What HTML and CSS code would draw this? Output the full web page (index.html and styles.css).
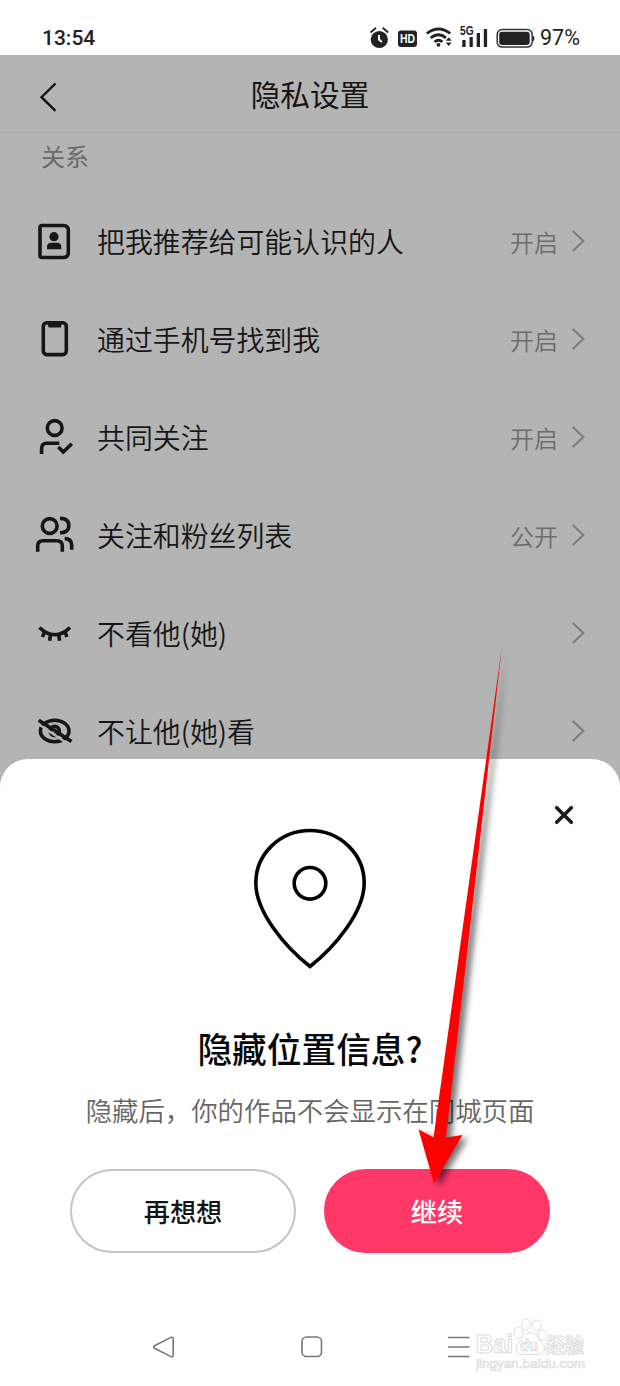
FILE: index.html
```
<!DOCTYPE html>
<html lang="zh-CN">
<head>
<meta charset="utf-8">
<title>隐私设置</title>
<link rel="stylesheet" href="styles.css">
</head>
<body>
<div class="screen">
  <div class="status">
    <span class="time">13:54</span>
    <svg class="status-icons" width="176" height="30" viewBox="0 0 176 30">
      <g fill="#222">
        <circle cx="19.300" cy="16.500" r="8.600"/>
        <path d="M10.500 9.500l5.500-4.700M28.200 9.500l-5.500-4.700" stroke="#222" stroke-width="1.800"/>
        <path d="M19 12v4.500l2.800 2.500" fill="none" stroke="#fff" stroke-width="2"/>
        <rect x="38" y="7.500" width="19" height="16.500" rx="3"/>
        <text x="47.500" y="20.300" class="hd" textLength="15" lengthAdjust="spacingAndGlyphs">HD</text>
        <g fill="none" stroke="#222" stroke-width="2.800">
          <path d="M66.800 10.500Q78.500 1.500 90.200 10.500M70.700 14.800Q78.500 8.800 86 14.800M74.600 18.800Q78.500 15.800 82.400 18.800"/>
        </g>
        <circle cx="78.500" cy="21.800" r="1.900"/>
        <path d="M85.700 17.700l3-3.500 3 3.500zM85.700 19.500l3 3.500 3-3.500z"/>
        <text x="100" y="12.300" class="fiveg" textLength="13.500" lengthAdjust="spacingAndGlyphs">5G</text>
        <path d="M102.300 17h3.300v7h-3.300zM109.500 14h3.300v10h-3.300zM116.700 10h3.300v14h-3.300zM123.800 6h3.300v18h-3.300z"/>
        <rect x="137.200" y="6.500" width="35" height="17.600" rx="5" fill="none" stroke="#333" stroke-width="1.500"/>
        <rect x="139.200" y="8.700" width="30.500" height="13.200" rx="3"/>
        <path d="M173 12.500q3 3 0 6z"/>
      </g>
    </svg>
    <span class="battery">97%</span>
  </div>

  <div class="page">
    <div class="header">
      <svg class="back" width="26" height="34" viewBox="0 0 26 34"><path d="M21.500 3.500L7.500 17.200l14 13.700"/></svg>
      <h1>隐私设置</h1>
    </div>
    <div class="section">关系</div>
    <div class="row">
      <svg class="icon" viewBox="0 0 40 40"><path d="M8 3.500h21.300q5 0 5 5v22q0 5-5 5H8q-2 0-2-2v-28q0-2 2-2z"/><circle class="solid" cx="20" cy="14.700" r="4.600"/><path class="solid" d="M13 27.300v-2.300q0-4.300 4.300-4.300h5.700q4.300 0 4.300 4.300v2.300z"/></svg>
      <span class="label">把我推荐给可能认识的人</span><span class="value">开启</span>
      <svg class="chev" viewBox="0 0 14 24"><path d="M2.300 2.500l10 9.500-10 9.500"/></svg>
    </div>
    <div class="row">
      <svg class="icon" viewBox="0 0 40 40"><rect x="9.300" y="2.800" width="23" height="31.800" rx="3.500"/><path class="solid" d="M13 3h15l-1.200 4.500H14.800z"/></svg>
      <span class="label">通过手机号找到我</span><span class="value">开启</span>
      <svg class="chev" viewBox="0 0 14 24"><path d="M2.300 2.500l10 9.500-10 9.500"/></svg>
    </div>
    <div class="row">
      <svg class="icon" viewBox="0 0 40 40"><circle cx="20.700" cy="10" r="7.400"/><path d="M7.600 36v-5.500q0-5.200 5.200-5.200h12.500M24.300 29l5 5 8.500-8.300"/></svg>
      <span class="label">共同关注</span><span class="value">开启</span>
      <svg class="chev" viewBox="0 0 14 24"><path d="M2.300 2.500l10 9.500-10 9.500"/></svg>
    </div>
    <div class="row">
      <svg class="icon" viewBox="0 0 40 40"><circle cx="15.700" cy="10" r="7.400"/><path d="M3.700 35.700V30q0-5.300 5.300-5.300h14q5.300 0 5.300 5.300v5.700M26 2.400q8.800 0 8.800 7.200T26 16.800M30.700 22.600q7 .2 7 6.400v4.800"/></svg>
      <span class="label">关注和粉丝列表</span><span class="value">公开</span>
      <svg class="chev" viewBox="0 0 14 24"><path d="M2.300 2.500l10 9.500-10 9.500"/></svg>
    </div>
    <div class="row">
      <svg class="icon" viewBox="0 0 40 40"><path d="M5.500 13.500Q12.500 20.700 20.700 20.700T36 13.500M10.500 17.500L8.500 23M16.600 20l-1 6.800M24.600 20l1 6.800M30.900 17.500l2 5.500"/></svg>
      <span class="label">不看他(她)</span>
      <svg class="chev" viewBox="0 0 14 24"><path d="M2.300 2.500l10 9.500-10 9.500"/></svg>
    </div>
    <div class="row">
      <svg class="icon" viewBox="0 0 40 40"><ellipse cx="20.700" cy="19" rx="14.300" ry="10.800"/><circle cx="20.700" cy="19" r="4.600"/><path class="gap" d="M2 10.600l31 20.600"/><path d="M4.700 8.300l32.800 21.300"/></svg>
      <span class="label">不让他(她)看</span>
      <svg class="chev" viewBox="0 0 14 24"><path d="M2.300 2.500l10 9.500-10 9.500"/></svg>
    </div>
  </div>

  <div class="sheet">
    <svg class="close" width="20" height="20" viewBox="0 0 20 20"><path d="M2.700 2.700l14.600 14.600M17.300 2.700l-14.600 14.600"/></svg>
    <svg class="pin" width="120" height="146" viewBox="0 0 120 146"><path d="M60 140.500C35 121 5.800 86 5.800 57a54.200 52.500 0 0 1 108.400 0C114.200 86 85 121 60 140.500z"/><circle cx="60" cy="57.300" r="15.800"/></svg>
    <h2>隐藏位置信息?</h2>
    <p>隐藏后，你的作品不会显示在同城页面</p>
    <div class="buttons">
      <button class="btn">再想想</button>
      <button class="btn primary">继续</button>
    </div>
    <div class="nav">
      <svg width="24" height="24" viewBox="0 0 24 24"><path d="M2.500 10.700L19 2.400q2.200-.8 2.200 1.500v16.200q0 2.300-2.200 1.500L2.500 13.300q-1.800-1.300 0-2.600z"/></svg>
      <svg width="24" height="24" viewBox="0 0 24 24"><rect x="2" y="2" width="19.500" height="19.500" rx="4.500"/></svg>
      <svg width="24" height="24" viewBox="0 0 24 24"><path d="M0 2.500h21.500M0 12h21.500M0 21.500h21.500"/></svg>
    </div>
  </div>

  <svg class="watermark" width="120" height="64" viewBox="0 0 120 64">
    <text x="4" y="36" class="wm-big" textLength="37" lengthAdjust="spacingAndGlyphs">Bai</text>
    <g class="wm-paw">
      <ellipse cx="45.500" cy="15.500" rx="4.300" ry="5.700"/><ellipse cx="53" cy="7.500" rx="4.500" ry="5.500"/><ellipse cx="63.500" cy="8.500" rx="4.500" ry="5.500"/><ellipse cx="69.500" cy="18" rx="4.300" ry="5.500"/>
      <path d="M57 15.500c6 0 8 6 12 10s4 12-5 12H50c-9 0-8-8-4-12s5-10 11-10z"/>
    </g>
    <text x="48" y="34" class="wm-du" textLength="18" lengthAdjust="spacingAndGlyphs">du</text>
    <text x="74" y="36" class="wm-cn" textLength="38" lengthAdjust="spacingAndGlyphs">经验</text>
    <text x="4" y="51" class="wm-url" textLength="109" lengthAdjust="spacingAndGlyphs">jingyan.baidu.com</text>
  </svg>

  <svg class="arrow" width="620" height="1386" viewBox="0 0 620 1386"><path d="M502 646L433.500 1137.500L418.500 1129.300L434 1183.500L462.500 1135L446 1137.500Z"/></svg>
</div>
</body>
</html>
```
FILE: styles.css
```
* { box-sizing: border-box; }
body {
  margin: 0;
  background: #fff;
  font-family: "Noto Sans CJK SC", sans-serif;
}
.screen {
  position: relative;
  display: flex;
  flex-direction: column;
  width: 620px;
  height: 1386px;
  overflow: hidden;
}
.status {
  display: flex;
  align-items: center;
  height: 55px;
  padding: 21px 40px 0 42px;
  color: #222;
  font-family: Roboto, sans-serif;
  font-size: 21.5px;
  line-height: 34px;
}
.time { width: 318px; font-weight: 500; font-size: 21px; }
.status-icons { margin-right: 4px; }
.hd { font: 700 12.5px "Liberation Sans", sans-serif; fill: #fff; text-anchor: middle; }
.fiveg { font: 700 12px "Liberation Sans", sans-serif; }
.page {
  height: 735px;
  background: #b4b4b4;
  color: #161616;
}
.header {
  display: flex;
  align-items: center;
  height: 78px;
  padding: 0 34px;
  border-bottom: 1px solid #a9a9a9;
}
.header h1 {
  flex: 1;
  margin: 0 26px 0 0;
  padding-top: 1px;
  text-align: center;
  font-size: 29.7px;
  font-weight: 400;
  line-height: 44px;
}
.back { margin-top: 6px; fill: none; stroke: #111; stroke-width: 2.4; }
.section {
  height: 60px;
  padding: 5px 41px;
  color: #6a6a6a;
  font-size: 24px;
  line-height: 36px;
}
.row {
  display: flex;
  align-items: center;
  height: 98px;
  padding: 0 34px;
}
.icon { width: 40px; height: 40px; margin-right: 23px; fill: none; stroke: #161616; stroke-width: 3.6; }
.icon .solid { fill: #161616; stroke: none; }
.icon .gap { stroke: #b4b4b4; stroke-width: 2.4; }
.label { flex: 1; padding-bottom: 2px; font-size: 27.9px; font-weight: 350; white-space: nowrap; }
.value { margin-right: 13px; padding-bottom: 2px; color: #6c6c6c; font-size: 24px; font-weight: 350; }
.chev { width: 14px; height: 24px; margin-right: 1px; margin-top: -2px; fill: none; stroke: #7e7e7e; stroke-width: 2.2; stroke-linecap: round; }
.sheet {
  position: relative;
  display: flex;
  flex-direction: column;
  align-items: center;
  height: 627px;
  margin-top: -31px;
  padding-top: 67px;
  border-radius: 28px 28px 0 0;
  background: #fff;
}
.close { position: absolute; top: 46px; right: 46px; fill: none; stroke: #1b1b1b; stroke-width: 3.6; stroke-linecap: round; }
.pin { fill: none; stroke: #000; stroke-width: 3.6; }
.sheet h2 {
  margin: 51px 0 0;
  color: #080808;
  font-size: 34.7px;
  font-weight: 500;
  line-height: 50px;
}
.sheet p {
  margin: 17px 0 0;
  color: #666;
  font-size: 26.4px;
  font-weight: 350;
  line-height: 40px;
  white-space: nowrap;
}
.buttons { display: flex; gap: 28px; margin-top: 39px; }
.btn {
  width: 226px;
  height: 84px;
  padding: 0 0 1px;
  border: 2px solid #c4c4c4;
  border-radius: 42px;
  background: #fff;
  color: #151515;
  font: 500 26.2px "Noto Sans CJK SC", sans-serif;
}
.btn.primary { border-color: #ff3868; background: #ff3868; color: #fff; }
.nav {
  display: flex;
  gap: 124px;
  margin: 82px 0 0 3px;
  fill: none;
  stroke: #777;
  stroke-width: 1.6;
}
.watermark { position: absolute; left: 472px; top: 1317px; fill: #fff; stroke: #dcdcdc; stroke-width: 1; }
.wm-big { font: 700 25px "Liberation Sans", sans-serif; }
.wm-paw { transform: translateX(1px); }
.wm-du { font: 700 17px "Liberation Sans", sans-serif; }
.wm-cn { font: 700 20px "Noto Sans CJK SC", sans-serif; }
.wm-url { font: 400 13px "Liberation Sans", sans-serif; stroke-width: .7; }
.arrow { position: absolute; left: 0; top: 0; fill: #fe0000; filter: drop-shadow(5px 3px 3px rgba(0, 0, 0, .55)); pointer-events: none; }
```
